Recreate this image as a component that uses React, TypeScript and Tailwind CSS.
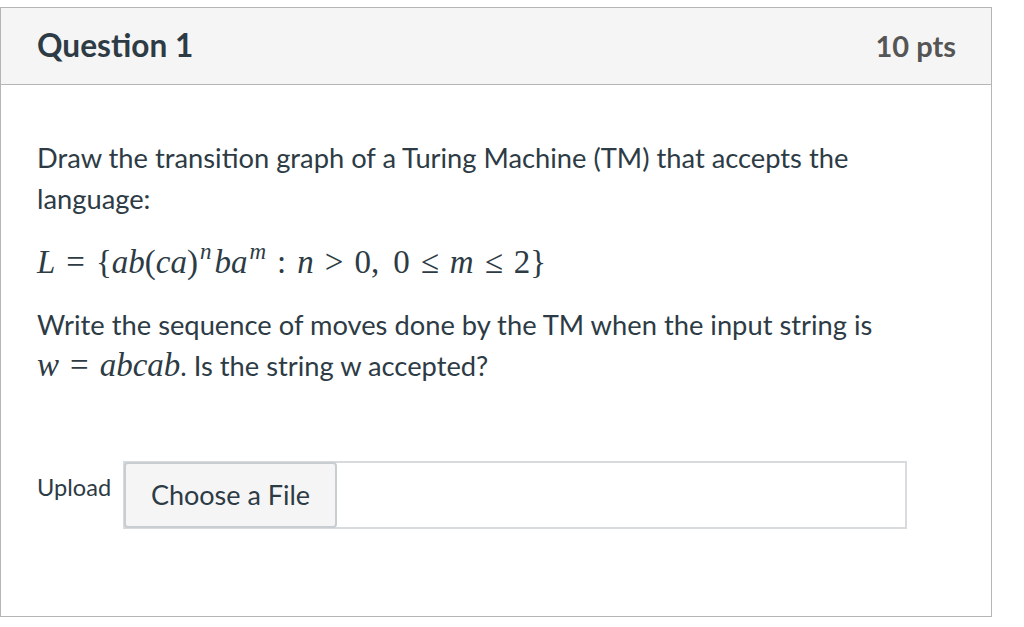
import React from 'react';

const Mi: React.FC<{ children: React.ReactNode }> = ({ children }) => (
  <span className="italic">{children}</span>
);

const Rel: React.FC<{ children: React.ReactNode }> = ({ children }) => (
  <span className="mx-[11px]">{children}</span>
);

const App: React.FC = () => {
  return (
    <div className="w-[1024px] h-[627px] bg-white pt-[7px] font-['Lato','Noto_Sans',sans-serif] text-[#2d3b45]">
      <div className="w-[992px] h-[610px] border border-[#b5b5b5] flex flex-col">
        {/* header */}
        <div className="h-[77px] shrink-0 bg-[#f5f5f5] border-b border-[#b5b5b5] flex items-center justify-between pl-[36px] pr-[35px]">
          <h2 className="text-[31.6px] font-bold text-[#2d3b45]">Question 1</h2>
          <span className="text-[29px] font-bold text-[#555555]">10 pts</span>
        </div>

        {/* body */}
        <div className="flex-1 pl-[36px] pt-[52px]">
          <p className="text-[27.3px] leading-[41px] w-[880px]">
            Draw the transition graph of a Turing Machine (TM) that accepts the language:
          </p>

          <p className="mt-[22px] h-[44px] flex items-center font-['Liberation_Serif','DejaVu_Serif',serif] text-[33px] whitespace-pre">
            <Mi>L</Mi>
            <Rel>=</Rel>
            <span>{'{'}</span>
            <Mi>ab</Mi>
            <span>(</span>
            <Mi>ca</Mi>
            <span>)</span>
            <span className="italic text-[23px] self-start -mt-[6px] ml-[2px] mr-[3px]">n</span>
            <Mi>ba</Mi>
            <span className="italic text-[23px] self-start -mt-[6px] ml-[2px]">m</span>
            <Rel>:</Rel>
            <Mi>n</Mi>
            <Rel>&gt;</Rel>
            <span>0,</span>
            <span className="ml-[14px]">0</span>
            <Rel>≤</Rel>
            <Mi>m</Mi>
            <Rel>≤</Rel>
            <span>2{'}'}</span>
          </p>

          <p className="mt-[19px] text-[27.3px] leading-[41px] w-[880px]">
            Write the sequence of moves done by the TM when the input string is
            <br />
            <span className="font-['Liberation_Serif','DejaVu_Serif',serif] text-[33px] italic">w</span>
            <span className="font-['Liberation_Serif','DejaVu_Serif',serif] text-[33px] mx-[11px]">=</span>
            <span className="font-['Liberation_Serif','DejaVu_Serif',serif] text-[33px] italic">abcab</span>
            . Is the string w accepted?
          </p>

          <div className="mt-[75px] flex items-start">
            <span className="text-[23.6px] leading-[28px] mt-[12px] w-[86px]">Upload</span>
            <div className="w-[784px] h-[68px] border-2 border-[#d7dbde] flex items-stretch">
              <button className="w-[213px] -m-[1px] bg-[#f5f5f5] border-2 border-[#c7cdd1] rounded-[4px] text-[27px] text-[#2d3b45] flex items-center justify-center">
                Choose a File
              </button>
            </div>
          </div>
        </div>
      </div>
    </div>
  );
};

export default App;
